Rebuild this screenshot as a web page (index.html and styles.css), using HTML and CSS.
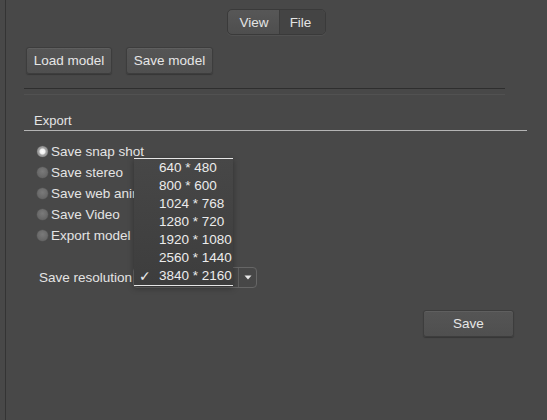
FILE: index.html
```html
<!DOCTYPE html>
<html>
<head>
<meta charset="utf-8">
<link rel="stylesheet" href="styles.css">
</head>
<body>
<div class="pane">
  <div class="tabs">
    <div class="seg">
      <span class="seg-item">View</span>
      <span class="seg-item active">File</span>
    </div>
  </div>

  <div class="model-row">
    <button class="btn">Load model</button>
    <button class="btn">Save model</button>
  </div>

  <div class="sep"></div>

  <section class="export">
    <div class="group-title">Export</div>
    <ul class="radios">
      <li class="radio checked"><span class="dot"></span>Save snap shot</li>
      <li class="radio"><span class="dot"></span>Save stereo</li>
      <li class="radio"><span class="dot"></span>Save web animation</li>
      <li class="radio"><span class="dot"></span>Save Video</li>
      <li class="radio"><span class="dot"></span>Export model</li>
    </ul>

    <div class="res-row">
      <span class="res-label">Save resolution</span>
      <div class="select">
        <span class="select-value">3840 * 2160</span>
        <span class="select-arrow"><svg width="8" height="5" viewBox="0 0 8 5"><path d="M0.5 0.5h7L4 4.5z" fill="#e8e8e8"/></svg></span>
      </div>
      <ul class="menu">
        <li>640 * 480</li>
        <li>800 * 600</li>
        <li>1024 * 768</li>
        <li>1280 * 720</li>
        <li>1920 * 1080</li>
        <li>2560 * 1440</li>
        <li class="sel"><span class="check">✓</span>3840 * 2160</li>
      </ul>
    </div>

    <div class="save-row">
      <button class="btn save">Save</button>
    </div>
  </section>
</div>
</body>
</html>
```

FILE: styles.css
```css
html, body {
  margin: 0;
  padding: 0;
  background: #484848;
  width: 547px;
  height: 420px;
  overflow: hidden;
  font-family: "Liberation Sans", Arial, sans-serif;
  font-size: 13px;
  color: #e4e4e4;
}

.pane {
  margin-left: 5px;
  border-left: 1px solid #343434;
  height: 420px;
  box-sizing: border-box;
}

/* segmented control */
.tabs {
  display: flex;
  justify-content: center;
  padding-top: 9px;
}
.seg {
  display: flex;
  height: 26px;
  box-sizing: border-box;
  border: 1px solid #3a3a3a;
  border-radius: 5px;
  background: linear-gradient(#575757, #4e4e4e);
  box-shadow: 0 1px 0 rgba(255,255,255,0.05);
  overflow: hidden;
}
.seg-item {
  display: flex;
  align-items: center;
  justify-content: center;
  padding: 0 10px 0 12px;
  font-size: 13.5px;
}
.seg-item.active {
  background: #444;
  border-left: 1px solid #3c3c3c;
  padding: 0 14px 0 10px;
}

/* buttons */
.model-row {
  display: flex;
  gap: 14px;
  padding: 12px 0 0 20px;
}
.btn {
  font: inherit;
  font-size: 13.5px;
  color: #e6e6e6;
  height: 27px;
  padding: 0;
  white-space: nowrap;
  background: linear-gradient(#555, #4f4f4f);
  border: 1px solid #3d3d3d;
  border-radius: 3px;
  box-shadow: 0 1px 1px rgba(0,0,0,0.25), inset 0 1px 0 rgba(255,255,255,0.06);
}
.model-row .btn:first-child { width: 86px; }
.model-row .btn:last-child { width: 87px; }

.sep {
  margin: 14px 42px 0 18px;
  height: 5px;
  border-top: 1px solid #2e2e2e;
  border-bottom: 1px solid #515151;
}

/* export group */
.export {
  padding-top: 18px;
}
.group-title {
  margin: 0 20px 0 18px;
  padding: 0 0 2px 10px;
  font-size: 13px;
  line-height: 15px;
  border-bottom: 1px solid #b4b4b4;
}

.radios {
  list-style: none;
  margin: 0;
  padding: 10px 0 0 31px;
}
.radio {
  display: flex;
  align-items: center;
  height: 21px;
  font-size: 13.5px;
}
.dot {
  width: 11px;
  height: 11px;
  border-radius: 50%;
  margin-right: 3px;
  background: radial-gradient(circle at 50% 40%, #7a7a7a, #5e5e5e);
  box-shadow: 0 0 0 0.5px #555;
}
.radio.checked .dot {
  background: radial-gradient(circle, #ffffff 0, #f0f0f0 2.5px, #a8a8a8 3.5px, #8c8c8c 5.5px);
}

/* resolution select with its open menu */
.res-row {
  position: relative;
  display: flex;
  align-items: center;
  margin-top: 20px;
  padding-left: 33px;
  height: 22px;
}
.res-label {
  font-size: 13.5px;
  width: 94px;
}
.select {
  display: flex;
  align-items: center;
  height: 21px;
  width: 124px;
  box-sizing: border-box;
  border: 1px solid #666;
  border-radius: 4px;
  background: #474747;
}
.select-value {
  flex: 1;
  padding-left: 24px;
  visibility: hidden;
}
.select-arrow {
  display: flex;
  align-items: center;
  justify-content: center;
  width: 17px;
  height: 100%;
  border-left: 1px solid #5e5e5e;
}

.menu {
  position: absolute;
  left: 128px;
  top: -108px;
  width: 99px;
  margin: 0;
  padding: 0;
  list-style: none;
  background: linear-gradient(#474747, #3d3d3d);
  border-top: 1px solid #e6e6e6;
  border-bottom: 1px solid #e6e6e6;
  box-shadow: 0 2px 6px rgba(0,0,0,0.35);
}
.menu li {
  position: relative;
  height: 18px;
  line-height: 18px;
  padding-left: 25px;
  font-size: 13.5px;
  color: #ececec;
  white-space: nowrap;
  overflow: hidden;
}
.check {
  position: absolute;
  left: 5px;
  top: 0;
  font-family: "DejaVu Sans", sans-serif;
  font-size: 14px;
}

.save-row {
  display: flex;
  justify-content: flex-end;
  padding: 22px 33px 0 0;
}
.btn.save {
  width: 91px;
  height: 27px;
}
```
